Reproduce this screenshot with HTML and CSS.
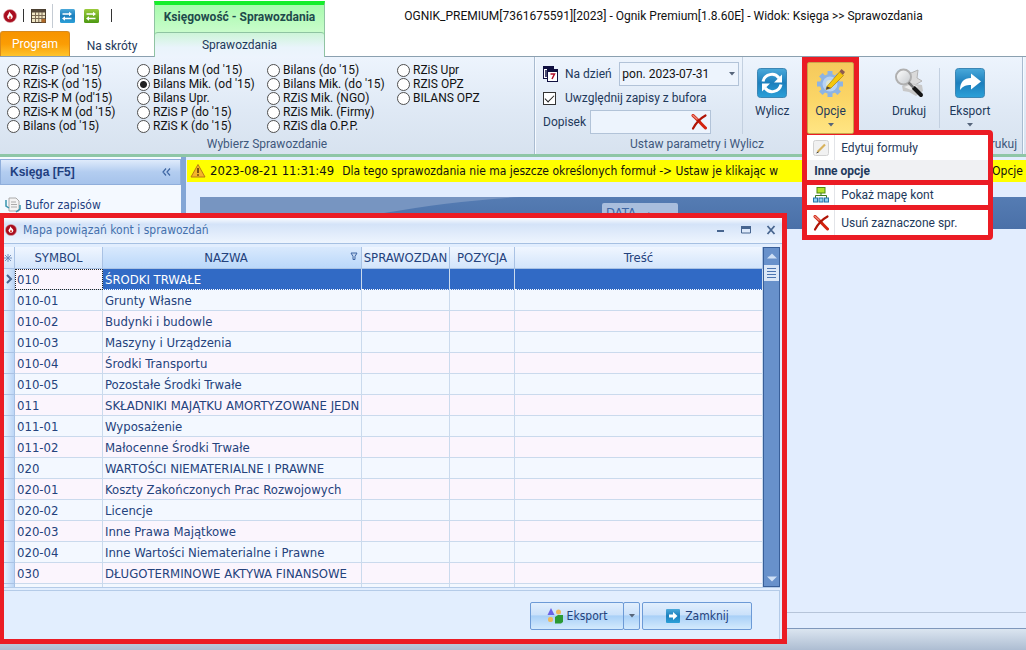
FILE: index.html
```html
<!DOCTYPE html>
<html lang="pl">
<head>
<meta charset="utf-8">
<title>Ognik Premium</title>
<link rel="stylesheet" href="styles.css">
</head>
<body>
<svg class="defs" aria-hidden="true">
  <defs>
    <linearGradient id="blue" x1="0" y1="0" x2="0" y2="1"><stop offset="0" stop-color="#4aa9da"/><stop offset=".5" stop-color="#1c7fbd"/><stop offset="1" stop-color="#2ba0d8"/></linearGradient>
    <linearGradient id="green" x1="0" y1="0" x2="0" y2="1"><stop offset="0" stop-color="#9bcb3c"/><stop offset="1" stop-color="#4d9a12"/></linearGradient>
    <linearGradient id="lens" x1="0" y1="0" x2="1" y2="1"><stop offset="0" stop-color="#ffffff"/><stop offset="1" stop-color="#c4c8cc"/></linearGradient>
    <symbol id="logo" viewBox="0 0 14 14"><circle cx="7" cy="7" r="6.500" fill="#a90d1f" stroke="#d9a0a0" stroke-width=".6"/><path d="M6.500 2.500c.4 2 3.300 3 3.300 5.500a2.900 2.900 0 0 1-5.700 0c0-1.300.9-1.800 1.300-2.700.3-.9.6-1.700 1.100-2.800z" fill="#fff"/><path d="M7 6.500c.2 1 1.300 1.200 1.300 2.200a1.300 1.300 0 0 1-2.600 0c0-.8.9-1.100 1.300-2.200z" fill="#d64a3a"/></symbol>
    <symbol id="cross" viewBox="0 0 16 16"><path d="M2 1.500c4 3.500 8 8 12.500 12.500" stroke="#d3230f" stroke-width="3" stroke-linecap="round" fill="none"/><path d="M14.500 1.500C9 4.500 5 9 2 14.500" stroke="#b01406" stroke-width="2.200" stroke-linecap="round" fill="none"/><path d="M2 1.500l4 3.500" stroke="#e98a7c" stroke-width="1.500" stroke-linecap="round"/></symbol>
    <symbol id="arrows" viewBox="0 0 14 14"><path d="M2.500 5h7M4.500 9.500h7" stroke="#fff" stroke-width="1.300"/><path d="M9 2.800L12 5 9 7.200zM5 7.300L2 9.500l3 2.200z" fill="#fff"/></symbol>
    <symbol id="down" viewBox="0 0 6 4"><path d="M0 0h6L3 3.500z" fill="#56657a"/></symbol>
  </defs>
</svg>

<div class="app">
  <header class="top">
    <div class="left">
      <div class="quick">
        <svg class="i14" aria-hidden="true"><use href="#logo"/></svg>
        <span class="bar"></span>
        <svg class="i16" viewBox="0 0 16 16" aria-hidden="true"><rect x="1.500" y="1.500" width="14" height="13" fill="#f0e6c4" stroke="#4b4030"/><path d="M2 2h13v2.500H2z" fill="#55483a"/><path d="M2 7.500h13M2 10.500h13M5.500 4v10M8.800 4v10M12 4v10" stroke="#7a6a54"/><path d="M11.500 11h4v3.500h-4z" fill="#b06a28"/></svg>
        <span class="thin"></span>
        <svg class="i16" viewBox="0 0 16 16" aria-hidden="true"><rect x="1" y="1" width="15" height="14" rx="1.500" fill="url(#blue)"/><use href="#arrows" x="1" y="1" width="14" height="14"/></svg>
        <svg class="i16 q2" viewBox="0 0 16 16" aria-hidden="true"><rect x="1" y="1" width="15" height="14" rx="1.500" fill="url(#green)"/><use href="#arrows" x="1" y="1" width="14" height="14"/></svg>
        <span class="bar"></span>
      </div>
      <nav class="tabs">
        <button class="program">Program</button>
        <button class="tab">Na skróty</button>
      </nav>
    </div>
    <div class="context">
      <div class="context-name">Księgowość - Sprawozdania</div>
      <button class="context-tab">Sprawozdania</button>
    </div>
    <div class="title">OGNIK_PREMIUM[7361675591][2023] - Ognik Premium[1.8.60E] - Widok: Księga &gt;&gt; Sprawozdania</div>
  </header>

  <section class="ribbon">
    <div class="group reports">
      <div class="radios">
        <label><input type="radio" name="r">RZiS-P (od '15)</label>
        <label><input type="radio" name="r">RZiS-K (od '15)</label>
        <label><input type="radio" name="r">RZiS-P M (od'15)</label>
        <label><input type="radio" name="r">RZiS-K M (od '15)</label>
        <label><input type="radio" name="r">Bilans (od '15)</label>
        <label><input type="radio" name="r">Bilans M (od '15)</label>
        <label><input type="radio" name="r" checked>Bilans Mik. (od '15)</label>
        <label><input type="radio" name="r">Bilans Upr.</label>
        <label><input type="radio" name="r">RZiS P (do '15)</label>
        <label><input type="radio" name="r">RZiS K (do '15)</label>
        <label><input type="radio" name="r">Bilans (do '15)</label>
        <label><input type="radio" name="r">Bilans Mik. (do '15)</label>
        <label><input type="radio" name="r">RZiS Mik. (NGO)</label>
        <label><input type="radio" name="r">RZiS Mik. (Firmy)</label>
        <label><input type="radio" name="r">RZiS dla O.P.P.</label>
        <label><input type="radio" name="r">RZiS Upr</label>
        <label><input type="radio" name="r">RZIS OPZ</label>
        <label><input type="radio" name="r">BILANS OPZ</label>
      </div>
      <div class="caption">Wybierz Sprawozdanie</div>
    </div>

    <div class="group params">
      <div class="tools">
        <div class="form">
          <div class="line">
            <svg class="i16" viewBox="0 0 16 16" aria-hidden="true"><rect x=".5" y=".5" width="10" height="12" fill="#fff" stroke="#101040"/><path d="M0 0h11v3H0z" fill="#101040"/><path d="M3 4v7" stroke="#101040" stroke-width="1.500"/><rect x="4.500" y="3.500" width="10" height="12" fill="#fff" stroke="#101040"/><path d="M4 3h11v3H4z" fill="#101040"/><path d="M7.500 8h4l-2.500 5" fill="none" stroke="#b0102a" stroke-width="1.500"/></svg>
            <label for="day">Na dzień</label>
            <span class="select"><select id="day"><option>pon. 2023-07-31</option></select><svg class="down" aria-hidden="true"><use href="#down"/></svg></span>
          </div>
          <label class="line check"><input type="checkbox" checked>Uwzględnij zapisy z bufora</label>
          <div class="line">
            <label for="note">Dopisek</label>
            <span class="field"><input id="note" type="text"><button aria-label="Wyczyść"><svg class="i16" aria-hidden="true"><use href="#cross"/></svg></button></span>
          </div>
        </div>
        <button class="big">
          <svg class="i30" viewBox="0 0 30 30" aria-hidden="true"><rect x=".5" y=".5" width="29" height="29" rx="3" fill="url(#blue)" stroke="#3c86b4"/><path d="M6 13.500A9 9 0 0 1 22 10M24 16.500A9 9 0 0 1 8 20" fill="none" stroke="#fff" stroke-width="3"/><path d="M25 6.500v8h-8zM5 23.500v-8h8z" fill="#fff"/></svg>
          <span>Wylicz</span>
        </button>
        <div class="options">
          <button class="big active">
            <svg class="i30" viewBox="0 0 30 30" aria-hidden="true"><g fill="#8db4e4"><circle cx="14" cy="16" r="10"/><path d="M11.500 3h5v26h-5zM1 13.500h26v5H1z"/><path d="M11.500 3h5v26h-5zM1 13.500h26v5H1z" transform="rotate(45 14 16)"/></g><circle cx="14" cy="16" r="7.500" fill="#b8d3f2"/><circle cx="14" cy="16" r="4" fill="#dce6d2"/><path d="M11 18.500L23.500 4l4 3.500L15 20l-5 1.500z" fill="#f4c80c" stroke="#b88a10" stroke-width=".8"/><path d="M23.500 3.500l2-2.500 3.500 3-2 2.800z" fill="#8c5a50"/><path d="M11 18.500l4 1.500-5 1.500z" fill="#4b4238"/></svg>
            <span>Opcje</span><svg class="down" aria-hidden="true"><use href="#down"/></svg>
          </button>
          <div class="menu">
            <button class="item"><span class="ico"><svg class="i16" viewBox="0 0 16 16" aria-hidden="true"><rect x=".5" y=".5" width="15" height="15" rx="2" fill="#f1f1f1" stroke="#d2d2d2"/><path d="M4.500 12L12 4.500" stroke="#d8b25c" stroke-width="2.200"/><path d="M3.500 13l2-1" stroke="#444"/></svg></span>Edytuj formuły</button>
            <div class="menu-head">Inne opcje</div>
            <button class="item boxed"><span class="ico"><svg class="i16" viewBox="0 0 16 16" aria-hidden="true"><rect x="4" y=".5" width="8" height="5.500" fill="#b4e22c" stroke="#4d8a10"/><path d="M8 6v3M2.500 11V8.500h11V11" fill="none" stroke="#3c7a1c"/><g fill="#8ed2f2" stroke="#2573a8"><rect x=".5" y="11" width="4" height="4"/><rect x="6" y="11" width="4" height="4"/><rect x="11.500" y="11" width="4" height="4"/></g></svg></span>Pokaż mapę kont</button>
            <button class="item"><span class="ico"><svg class="i16" aria-hidden="true"><use href="#cross"/></svg></span>Usuń zaznaczone spr.</button>
          </div>
        </div>
      </div>
      <div class="caption">Ustaw parametry i Wylicz</div>
    </div>

    <div class="group print">
      <div class="tools">
        <button class="big">
          <svg class="i30" viewBox="0 0 30 30" aria-hidden="true"><path d="M13 4l4 1 7-3-1 8 5 3-7 4-9-1z" fill="#dadada" stroke="#b4b4b4"/><path d="M8 18l8-3 12 2 1 6-7 5-7-4-6-1z" fill="#c8c8c8"/><path d="M10 19l8-3 6 3-7 3z" fill="#ececec"/><path d="M20 20l7 7" stroke="#151515" stroke-width="4" stroke-linecap="round"/><circle cx="9.500" cy="9" r="7.500" fill="url(#lens)" stroke="#b0b0b0" stroke-width="2"/><path d="M14.500 14.500l5 5" stroke="#777" stroke-width="2.500"/></svg>
          <span>Drukuj</span>
        </button>
        <span class="sep"></span>
        <button class="big">
          <svg class="i30" viewBox="0 0 30 30" aria-hidden="true"><rect x=".5" y=".5" width="29" height="29" rx="3" fill="url(#blue)" stroke="#3c86b4"/><path d="M5 22c0-8 4-12 11-12V5.500l10 8-10 8V17c-5 0-8 1-11 5z" fill="#fff"/></svg>
          <span>Eksport</span><svg class="down" aria-hidden="true"><use href="#down"/></svg>
        </button>
      </div>
      <div class="caption">Drukuj</div>
    </div>
  </section>

  <main class="work">
    <aside class="side">
      <div class="side-head"><span>Księga [F5]</span><svg class="chev" viewBox="0 0 9 8" aria-hidden="true"><path d="M4 .5L1 4l3 3.500M8 .5L5 4l3 3.500" fill="none" stroke="#3f66a3" stroke-width="1.200"/></svg></div>
      <a class="side-link" href="#"><svg class="i16" viewBox="0 0 16 16" aria-hidden="true"><path d="M4 1h7l3 3v10H4z" fill="#f4f4f4" stroke="#aaa"/><path d="M6 5h5M6 7.500h6M6 10h6" stroke="#aaa"/><path d="M1 3v6l3 2M15 8v4l-4 3" fill="none" stroke="#3794ae" stroke-width="1.500"/></svg>Bufor zapisów</a>
    </aside>
    <div class="content">
      <div class="alert">
        <svg class="i16" viewBox="0 0 16 16" aria-hidden="true"><path d="M8 1.500L15 14H1z" fill="#f5b52a" stroke="#b97b14" stroke-linejoin="round"/><path d="M8 5v5M8 11.200v1.500" stroke="#5c3a08" stroke-width="1.600"/></svg>
        <time>2023-08-21 11:31:49</time>
        <span class="msg">Dla tego sprawozdania nie ma jeszcze określonych formuł -&gt; Ustaw je klikając w</span>
        <span>Opcje</span>
      </div>
      <div class="band">
        <svg class="swoosh" viewBox="0 0 320 32" preserveAspectRatio="none" aria-hidden="true"><path d="M0 0h320C270 3 230 8 184 16S60 30 0 32z" fill="#7795c1"/></svg>
        <span class="chip">DATA<i>▲</i></span>
      </div>
      <div class="canvas"></div>
    </div>
  </main>
  <footer class="status"></footer>

  <section class="dialog">
    <div class="dlg-title">
      <svg class="i12" aria-hidden="true"><use href="#logo"/></svg>
      <span>Mapa powiązań kont i sprawozdań</span>
      <button aria-label="Minimalizuj"><svg viewBox="0 0 10 10" aria-hidden="true"><path d="M1 6h7" stroke="#47658f" stroke-width="2"/></svg></button>
      <button aria-label="Maksymalizuj"><svg viewBox="0 0 10 10" aria-hidden="true"><path d="M.5 2v6h9V2" fill="none" stroke="#47658f"/><path d="M0 2.500h10" stroke="#47658f" stroke-width="3"/></svg></button>
      <button aria-label="Zamknij okno"><svg viewBox="0 0 10 10" aria-hidden="true"><path d="M1.500 1l7 8M8.500 1l-7 8" stroke="#47658f" stroke-width="1.800"/></svg></button>
    </div>
    <div class="grid">
      <div class="table-wrap">
      <table>
        <colgroup><col class="c0"><col class="c1"><col class="c2"><col class="c3"><col class="c4"><col></colgroup>
        <thead><tr><th><svg class="star" viewBox="0 0 8 8" aria-hidden="true"><path d="M4 0v8M0 4h8M1 1l6 6M7 1L1 7" stroke="#6a87b4" stroke-width=".9"/></svg></th><th>SYMBOL</th><th class="sel">NAZWA<svg class="funnel" viewBox="0 0 7 8" aria-hidden="true"><path d="M.5 1h6L4.500 4.500V7.500h-2v-3z" fill="#c0d4ee" stroke="#3f66a3"/></svg></th><th>SPRAWOZDAN</th><th>POZYCJA</th><th>Treść</th></tr></thead>
        <tbody>
          <tr class="cur"><td><svg class="mark" viewBox="0 0 7 10" aria-hidden="true"><path d="M1 1l4 4-4 4" fill="none" stroke="#47658f" stroke-width="2"/></svg></td><td>010</td><td>ŚRODKI TRWAŁE</td><td></td><td></td><td></td></tr>
          <tr><td></td><td>010-01</td><td>Grunty Własne</td><td></td><td></td><td></td></tr>
          <tr><td></td><td>010-02</td><td>Budynki i budowle</td><td></td><td></td><td></td></tr>
          <tr><td></td><td>010-03</td><td>Maszyny i Urządzenia</td><td></td><td></td><td></td></tr>
          <tr><td></td><td>010-04</td><td>Środki Transportu</td><td></td><td></td><td></td></tr>
          <tr><td></td><td>010-05</td><td>Pozostałe Środki Trwałe</td><td></td><td></td><td></td></tr>
          <tr><td></td><td>011</td><td>SKŁADNIKI MAJĄTKU AMORTYZOWANE JEDN</td><td></td><td></td><td></td></tr>
          <tr><td></td><td>011-01</td><td>Wyposażenie</td><td></td><td></td><td></td></tr>
          <tr><td></td><td>011-02</td><td>Małocenne Środki Trwałe</td><td></td><td></td><td></td></tr>
          <tr><td></td><td>020</td><td>WARTOŚCI NIEMATERIALNE I PRAWNE</td><td></td><td></td><td></td></tr>
          <tr><td></td><td>020-01</td><td>Koszty Zakończonych Prac Rozwojowych</td><td></td><td></td><td></td></tr>
          <tr><td></td><td>020-02</td><td>Licencje</td><td></td><td></td><td></td></tr>
          <tr><td></td><td>020-03</td><td>Inne Prawa Majątkowe</td><td></td><td></td><td></td></tr>
          <tr><td></td><td>020-04</td><td>Inne Wartości Niematerialne i Prawne</td><td></td><td></td><td></td></tr>
          <tr><td></td><td>030</td><td>DŁUGOTERMINOWE AKTYWA FINANSOWE</td><td></td><td></td><td></td></tr>
          <tr class="cut"><td></td><td></td><td></td><td></td><td></td><td></td></tr>
        </tbody>
      </table>
      </div>
      <div class="scroll">
        <svg viewBox="0 0 10 6" aria-hidden="true"><path d="M0 5.500L5 .5l5 5z" fill="#cfe0f6"/></svg>
        <span class="thumb"></span>
        <svg class="bottom" viewBox="0 0 10 6" aria-hidden="true"><path d="M0 .5h10l-5 5z" fill="#cfe0f6"/></svg>
      </div>
    </div>
    <div class="dlg-foot">
      <div class="split">
        <button class="btn exp"><svg class="i16" viewBox="0 0 16 16" aria-hidden="true"><path d="M4 0l3.500 7h-7z" fill="#6a62e6"/><circle cx="11.500" cy="4" r="2.500" fill="#efb95a"/><rect x="1" y="9" width="5" height="5" rx="2" fill="#efb95a"/><path d="M8 9l3-2h5v7l-2 1.500H8z" fill="#2b9a34"/></svg>Eksport</button><button class="btn arrow" aria-label="Więcej"><svg class="down" aria-hidden="true"><use href="#down"/></svg></button>
      </div>
      <button class="btn close"><svg class="i16" viewBox="0 0 16 16" aria-hidden="true"><rect x="1" y="1" width="14" height="14" rx="1" fill="url(#blue)"/><path d="M4 6.500h4V4l4.500 4L8 12V9.500H4z" fill="#fff"/></svg>Zamknij</button>
    </div>
  </section>
</div>
</body>
</html>
```
FILE: styles.css
```css
* { box-sizing: border-box; }
body { margin: 0; background: #fff; font: 12px/16px Roboto, "Noto Sans", sans-serif; color: #1e395b; }
button, input, select { font: inherit; color: inherit; margin: 0; padding: 0; border: 0; background: none; }
button { white-space: nowrap; }
svg { display: block; flex: none; }
.defs { position: absolute; width: 0; height: 0; }
.i12 { width: 12px; height: 12px; }
.i14 { width: 14px; height: 14px; }
.i16 { width: 16px; height: 16px; }
.i30 { width: 30px; height: 30px; }
.down { width: 6px; height: 4px; }

.app { position: relative; display: flex; flex-direction: column; min-height: 100vh; overflow: hidden; }

.top { display: flex; height: 57px; border-bottom: 1px solid #8ba0b0; }
.left { width: 154px; display: flex; flex-direction: column; }
.quick { height: 31px; display: flex; align-items: center; padding-left: 3px; gap: 6px; }
.bar { width: 1px; height: 13px; background: #333; }
.thin { width: 1px; height: 24px; background: #c4cbd3; }
.q2 { margin: 0 6px 0 2px; }
.tabs { display: flex; flex: 1; }
.program { width: 70px; border: 1px solid #d88a1c; border-bottom: 0; border-radius: 3px 3px 0 0; background: linear-gradient(#f79400, #fb9d04 50%, #ffc42c); color: #fff; }
.tab { width: 84px; padding-top: 4px; }
.context { width: 171px; display: flex; flex-direction: column; border: 1px solid #8fc3a2; border-top: 4px solid #16ee2b; border-bottom: 0; margin: 1px 0 -1px; background: #b5fcb9; z-index: 1; }
.context-name { height: 27px; line-height: 25px; text-align: center; font-weight: 700; color: #1e4a4b; background: linear-gradient(#a8fbad, #c9fccb); white-space: nowrap; }
.context-tab { flex: 1; border-top: 1px solid #8fc3a2; border-radius: 3px 3px 0 0; background: linear-gradient(#cdf5d8, #e9f4fb 60%, #edf4fd); }
.title { flex: 1; padding: 8px 24px 0 0; text-align: center; color: #111; white-space: nowrap; }

.ribbon { display: flex; height: 100px; background: linear-gradient(#edf4fd, #dfe9f5 55%, #d7e2ef); border-bottom: 3px solid #8ec6a6; }
.group { display: flex; flex-direction: column; border-right: 1px solid #a9bbd0; box-shadow: 1px 0 #f6faff; }
.reports { width: 535px; }
.params { width: 324px; border-right: 0; box-shadow: none; }
.print { flex: 1; margin-right: 3px; }
.caption { margin-top: auto; height: 18px; text-align: center; color: #40587c; }
.print .caption { text-align: right; padding-right: 5px; }
.radios { display: grid; grid-auto-flow: column; grid-template-rows: repeat(5, 14px); grid-auto-columns: 130px; padding: 6px 7px 0; color: #111; }
.radios label { display: flex; align-items: center; gap: 3px; white-space: nowrap; line-height: 14px; }
.radios input { appearance: none; width: 13px; height: 13px; border: 1px solid #4f4f4f; border-radius: 50%; background: #fff; }
.radios input:checked { background: radial-gradient(circle, #222 3px, #fff 4px); }

.tools { display: flex; }
.form { width: 209px; padding: 5px 0 0 8px; display: flex; flex-direction: column; border-right: 1px solid #c3d0e0; margin-bottom: 2px; }
.line { display: flex; align-items: center; height: 24px; white-space: nowrap; }
.line .i16 { margin-right: 6px; }
.select { position: relative; margin-left: auto; margin-right: 3px; width: 120px; height: 24px; }
.select select { appearance: none; width: 100%; height: 100%; border: 1px solid #b2c3d8; background: #edf4fd; padding-left: 2px; color: #111; }
.select .down { position: absolute; right: 4px; top: 10px; }
.check input { appearance: none; width: 13px; height: 13px; border: 1px solid #333; background: #fff; margin-right: 9px; display: grid; place-items: center; }
.check input::after { content: ""; width: 8px; height: 4px; border: solid #222; border-width: 0 0 1px 1px; transform: rotate(-45deg); margin-bottom: 2px; }
.field { display: flex; align-items: center; width: 121px; height: 24px; margin-left: auto; margin-right: 31px; border: 1px solid #b2c3d8; background: #edf4fd; }
.field input { flex: 1; min-width: 0; }
.field .i16 { margin-right: 3px; }
.big { width: 58px; height: 72px; padding-top: 11px; display: flex; flex-direction: column; align-items: center; }
.big span { margin-top: 5px; }
.big .down { margin-top: 4px; }
.options { position: relative; margin-left: 1px; width: 57px; height: 76px; border: 5px solid #eb1c24; border-bottom: 0; background: #eb1c24; z-index: 3; }
.big.active { position: relative; z-index: 1; width: 100%; padding-top: 5px; background: linear-gradient(#f5c95c, #fbd566 50%, #ffe583); border: 1px solid #c9a34a; border-radius: 2px; }
.menu { position: absolute; left: -5px; top: 68px; width: 191px; border: 5px solid #eb1c24; border-radius: 0 4px 4px 0; background: #fff; }
.item { display: flex; align-items: center; width: 100%; height: 25px; background: #fff; text-align: left; }
.item .ico { width: 28px; align-self: stretch; display: grid; place-items: center; border-right: 1px solid #e2e4e8; margin-right: 6px; }
.menu-head { height: 20px; line-height: 22px; padding-left: 7px; font-weight: 700; background: #f0f1f3; }
.item.boxed { height: 30px; border: solid #eb1c24; border-width: 5px 0; }
.print .tools { padding-left: 21px; }
.sep { width: 1px; height: 60px; margin: 11px 1px 0; background: #c3d0e0; }

.work { flex: 1; display: flex; background: #e2edfe; font-family: "DejaVu Sans Condensed", "DejaVu Sans", sans-serif; }
.side { width: 186px; padding-top: 2px; border-right: 5px solid #83a6d6; background: #f4f9ff; color: #1f3f80; }
.side-head { display: flex; justify-content: space-between; align-items: center; height: 26px; padding: 0 9px; border: 1px solid #8faedb; background: linear-gradient(#dfebfb, #b3cdf0 50%, #a6c3eb); font-weight: 700; font-family: "Liberation Sans", sans-serif; }
.chev { width: 9px; height: 8px; }
.side-link { display: flex; align-items: center; gap: 4px; margin: 12px 5px; color: inherit; text-decoration: none; }
.content { flex: 1; min-width: 0; display: flex; flex-direction: column; padding: 3px 0 0 1px; }
.alert { display: flex; align-items: center; height: 22px; padding: 0 3px; gap: 4px; background: #ff0; color: #111; white-space: nowrap; overflow: hidden; }
.alert time { font-size: 13px; margin-right: 4px; }
.msg { flex: 1; min-width: 0; overflow: hidden; }
.band { position: relative; height: 32px; margin: 15px 0 0 13px; background: linear-gradient(#557cb3, #4a70a8); }
.swoosh { width: 320px; height: 32px; }
.chip { position: absolute; left: 402px; top: 6px; width: 76px; height: 24px; padding: 2px 0 0 4px; border-radius: 2px; background: #a9bedd; color: #3f66a3; font-size: 13px; }
.chip i { font-style: normal; font-size: 8px; margin-left: 10px; }
.canvas { flex: 1; margin-bottom: 15px; border-bottom: 1px solid #b6c4d9; }
.status { height: 22px; border-top: 1px solid #7f97bb; background: linear-gradient(#dbe5f0, #adbdd2); }

.dialog { position: absolute; left: 0; top: 213px; width: 787px; border: 5px solid #eb1c24; border-left-width: 4px; background: #e2eefe; z-index: 2; color: #24427c; font-family: "DejaVu Sans Condensed", "DejaVu Sans", sans-serif; }
.dlg-title { display: flex; align-items: center; height: 26px; padding: 0 6px 2px 1px; background: linear-gradient(#fafcff, #d4e3f8 25%, #eef5fe); border-bottom: 1px solid #a6c0e2; color: #4470ac; }
.dlg-title span { flex: 1; margin-left: 6px; }
.dlg-title button { width: 10px; height: 10px; margin-left: 15px; }
.grid { display: flex; margin: 3px 2px 0 0; border-bottom: 1px solid #b4cbe8; font-size: 13px; }
.table-wrap { flex: 1; min-width: 0; }
table { width: 100%; border-collapse: separate; border-spacing: 0; table-layout: fixed; }
.c0 { width: 11px; } .c1 { width: 88px; } .c2 { width: 259px; } .c3 { width: 88px; } .c4 { width: 65px; }
th { position: relative; height: 22px; padding: 0; font-weight: 400; background: linear-gradient(#f0f6ff, #d3e5fb); border: solid #a9c2e4; border-width: 0 1px 1px 0; overflow: hidden; white-space: nowrap; }
th.sel { background: linear-gradient(#d9e9fd, #bad8fa); padding-right: 12px; }
.star { width: 8px; height: 8px; }
.funnel { position: absolute; right: 3px; top: 5px; width: 8px; height: 8px; }
td { height: 21px; padding: 1px 0 0 2px; border: solid #cadaed; border-width: 0 1px 1px 0; white-space: nowrap; overflow: hidden; background: #fbf5fd; line-height: 16px; }
tr:nth-child(even) td { background: #f3f8ff; }
tbody td:first-child { background: linear-gradient(90deg, #e8f2ff, #bcd6f6); border-color: #a9c2e4; padding: 0; }
tr.cur td:nth-child(n+3) { background: #316ac5; color: #fff; border-bottom: 1px dotted #fff; }
tr.cur td:nth-child(2) { outline: 1px dotted #222; outline-offset: -1px; }
.mark { width: 7px; height: 10px; margin-left: 2px; }
.cut td { height: 3px; border-bottom: 0; }
.scroll { display: flex; flex-direction: column; align-items: center; width: 17px; background: #6891cb; border: 1px solid #395f99; padding: 5px 0 4px; }
.scroll svg { width: 10px; height: 6px; }
.thumb { width: 15px; height: 16px; margin-top: 6px; border: solid #dbe7f7; border-width: 3px; background: repeating-linear-gradient(#4b74b0 0 1px, #dbe7f7 1px 3px); }
.scroll .bottom { margin-top: auto; }
.dlg-foot { display: flex; justify-content: flex-end; gap: 2px; margin: 2px 2px 0 0; height: 49px; padding: 11px 27px 0 0; border: 1px solid #b4cbe8; border-width: 1px 1px 0 0; }
.split { display: flex; }
.btn { height: 28px; display: flex; align-items: center; justify-content: center; gap: 4px; border: 1px solid #6c9ad6; border-radius: 2px; background: linear-gradient(#e2effd, #cbe1fa 45%, #a9d0f7 50%, #d3eafd); }
.exp { width: 94px; }
.arrow { width: 17px; margin-left: -1px; }
.close { width: 110px; }
```
